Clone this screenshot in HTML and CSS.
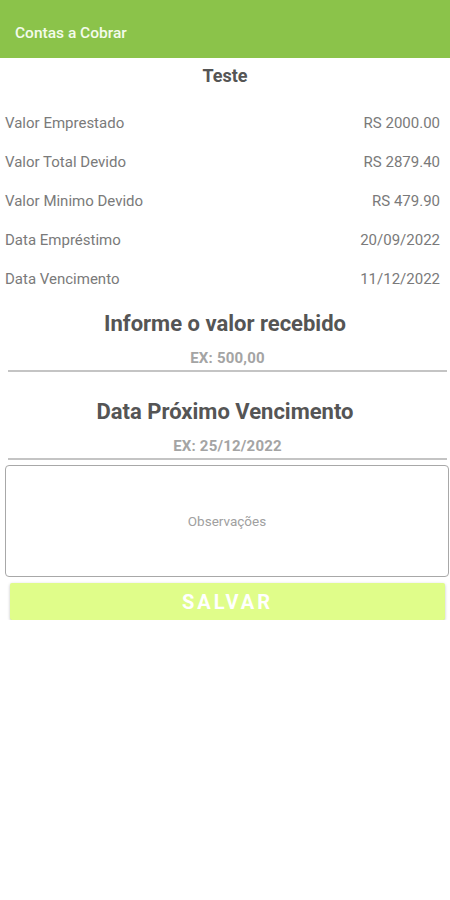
FILE: index.html
```html
<!DOCTYPE html>
<html lang="pt-BR">

<head>
    <meta charset="UTF-8">
    <meta name="viewport" content="width=device-width, initial-scale=1.0">
    <title>Contas a Cobrar</title>
    <link rel="stylesheet" href="styles.css">
</head>

<body>

    <header class="app-bar">
        <span class="app-title">Contas a Cobrar</span>
    </header>

    <main class="content">
        <h2 class="client-name">Teste</h2>

        <div class="info-list">
            <div class="info-row">
                <span>Valor Emprestado</span>
                <span>RS 2000.00</span>
            </div>
            <div class="info-row">
                <span>Valor Total Devido</span>
                <span>RS 2879.40</span>
            </div>
            <div class="info-row">
                <span>Valor Minimo Devido</span>
                <span>RS 479.90</span>
            </div>
            <div class="info-row">
                <span>Data Empréstimo</span>
                <span>20/09/2022</span>
            </div>
            <div class="info-row">
                <span>Data Vencimento</span>
                <span>11/12/2022</span>
            </div>
        </div>

        <h3 class="field-title first">Informe o valor recebido</h3>
        <input type="text" class="line-input" placeholder="EX: 500,00">

        <h3 class="field-title">Data Próximo Vencimento</h3>
        <input type="text" class="line-input" placeholder="EX: 25/12/2022">

        <textarea class="notes" placeholder="Observações"></textarea>

        <button class="save-button">SALVAR</button>
    </main>

</body>

</html>
```

FILE: styles.css
```css
body {
    font-family: Roboto, "Liberation Sans", sans-serif;
    margin: 0;
    background-color: #fff;
}

.app-bar {
    height: 58px;
    background-color: #8bc34a;
    display: flex;
    align-items: center;
    padding-left: 15px;
}

.app-title {
    color: #f4fbec;
    font-size: 15.5px;
    font-weight: 500;
    margin-top: 8px;
}

.content {
    display: flex;
    flex-direction: column;
}

.client-name {
    margin: 6px 0 0;
    font-size: 18px;
    line-height: 24px;
    font-weight: 700;
    text-align: center;
    color: #555;
}

.info-list {
    padding: 16px 10px 0 5px;
}

.info-row {
    display: flex;
    justify-content: space-between;
    height: 39px;
    line-height: 39px;
    font-size: 15px;
    color: #7a7a7a;
}

.field-title {
    margin: 26px 0 3px;
    font-size: 22px;
    line-height: 28px;
    font-weight: 700;
    text-align: center;
    color: #555;
}

.field-title.first {
    margin-top: 11px;
}

.line-input {
    margin: 0 3px 0 8px;
    padding: 7px 0 2px;
    border: none;
    border-bottom: 2px solid #c4c4c4;
    font-family: inherit;
    font-size: 15px;
    line-height: 20px;
    letter-spacing: 0.2px;
    text-align: center;
    outline: none;
}

.line-input::placeholder {
    color: #a4a4a4;
    font-weight: 700;
}

.notes {
    margin: 5px 1px 0 5px;
    height: 112px;
    box-sizing: border-box;
    padding: 46px 10px 0;
    border: 1px solid #a8a8a8;
    border-radius: 4px;
    font-family: inherit;
    font-size: 13.5px;
    line-height: 18px;
    text-align: center;
    resize: none;
}

.notes::placeholder {
    color: #a0a0a0;
}

.save-button {
    margin: 6px 5px 0 10px;
    height: 37px;
    background-color: #e0fd8a;
    color: #fff;
    border: none;
    border-radius: 2px;
    box-shadow: 0 1px 3px rgba(0, 0, 0, 0.25);
    font-family: inherit;
    font-size: 20px;
    font-weight: 700;
    letter-spacing: 3px;
}
```
